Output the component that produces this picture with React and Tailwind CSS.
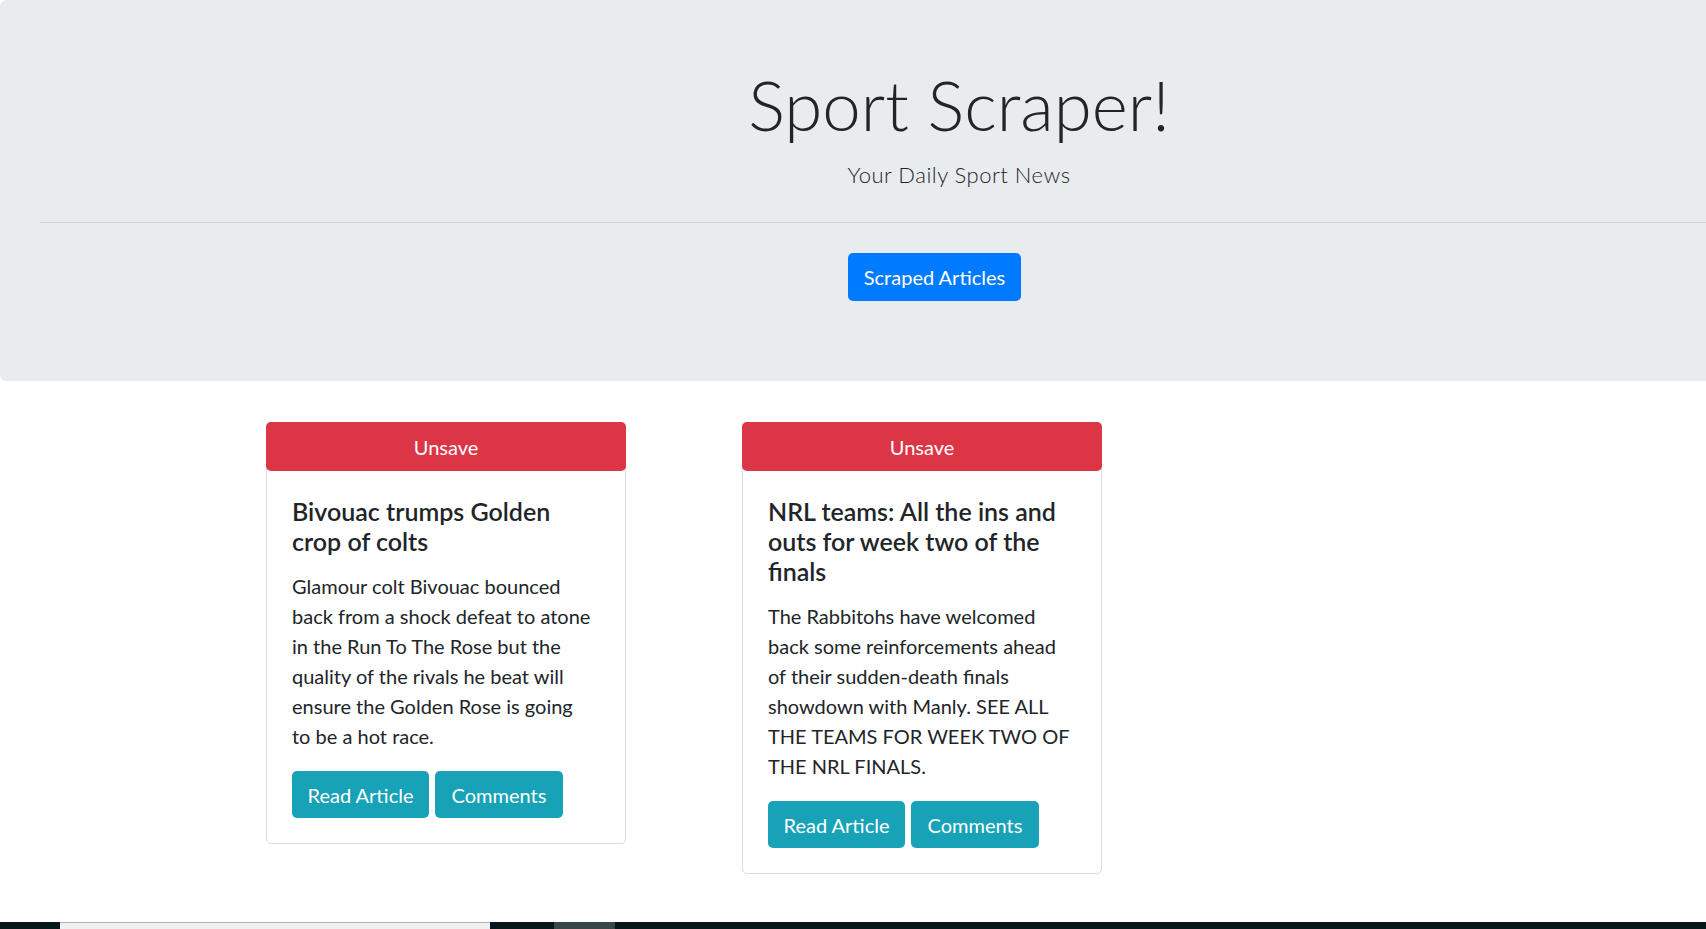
import React from 'react';

const articles = [
  {
    id: 1,
    title: ['Bivouac trumps Golden', 'crop of colts'],
    summary: [
      'Glamour colt Bivouac bounced',
      'back from a shock defeat to atone',
      'in the Run To The Rose but the',
      'quality of the rivals he beat will',
      'ensure the Golden Rose is going',
      'to be a hot race.',
    ],
  },
  {
    id: 2,
    title: ['NRL teams: All the ins and', 'outs for week two of the', 'finals'],
    summary: [
      'The Rabbitohs have welcomed',
      'back some reinforcements ahead',
      'of their sudden-death finals',
      'showdown with Manly. SEE ALL',
      'THE TEAMS FOR WEEK TWO OF',
      'THE NRL FINALS.',
    ],
  },
];

const ArticleCard = ({ article }) => (
  <div className="w-[360px] flex flex-col bg-white border border-[#dcdcdc] rounded-[5px]">
    {/* kaydedilmiş makaleyi kaldır */}
    <button className="-mx-px -mt-px h-[49px] bg-[#dc3545] text-white text-[20px] leading-[30px] rounded-[5px]">
      Unsave
    </button>
    <div className="px-[25px] pt-[25px] pb-[25px]">
      <h5 className="text-[25px] leading-[30px] font-semibold text-[#212529] mb-[15px] whitespace-nowrap">
        {article.title.map((line, i) => (
          <span key={i} className="block">{line}</span>
        ))}
      </h5>
      <p className="text-[20px] leading-[30px] text-[#212529] mb-[20px] whitespace-nowrap">
        {article.summary.map((line, i) => (
          <span key={i} className="block">{line}</span>
        ))}
      </p>
      <div className="flex gap-[6px]">
        <button className="w-[137px] h-[47px] bg-[#17a2b8] text-white text-[20px] rounded-[5px]">
          Read Article
        </button>
        <button className="w-[128px] h-[47px] bg-[#17a2b8] text-white text-[20px] rounded-[5px]">
          Comments
        </button>
      </div>
    </div>
  </div>
);

const App = () => {
  return (
    <div className="h-[929px] w-full overflow-hidden flex flex-col bg-white font-['Lato','Liberation_Sans',sans-serif] text-[#212529]">
      <div className="w-[1918px] shrink-0 bg-[#e9ecef] rounded-[6px] pt-[63px] pb-[80px]">
        <h1 className="text-center text-[69px] leading-[84px] font-light">Sport Scraper!</h1>
        <p className="mt-[13px] text-center text-[22px] leading-[30px] font-light tracking-[0.5px]">Your Daily Sport News</p>
        <hr className="mt-[32px] ml-[40px] border-0 border-t border-[#d0d3d6]" />
        <div className="mt-[30px] flex justify-center">
          <button className="mr-[49px] w-[173px] h-[48px] bg-[#007bff] text-white text-[20px] rounded-[5px]">
            Scraped Articles
          </button>
        </div>
      </div>

      <div className="mt-[41px] pl-[266px] flex items-start gap-[116px]">
        {articles.map((article) => (
          <ArticleCard key={article.id} article={article} />
        ))}
      </div>

      <div className="mt-auto h-[7px] shrink-0 flex bg-[#06171b]">
        <div className="ml-[60px] w-[430px] bg-[#f0f0f0] border-t border-[#b4b4b4]" />
        <div className="ml-[64px] w-[61px] bg-[#3b4649]" />
      </div>
    </div>
  );
};

export default App;
